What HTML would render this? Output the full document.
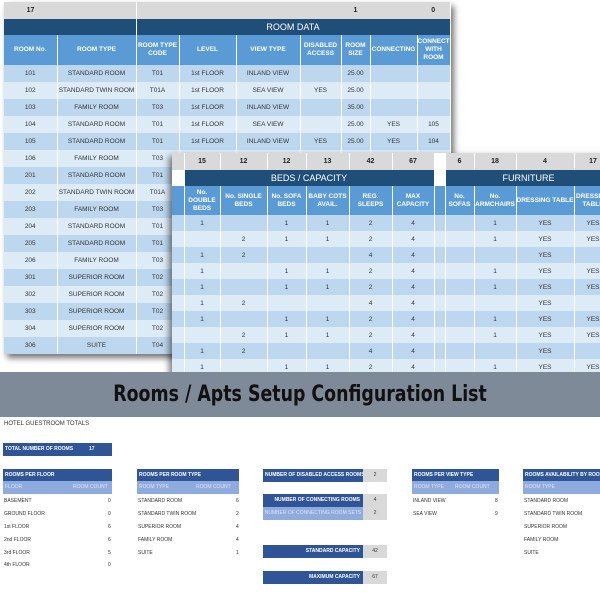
<!DOCTYPE html>
<html><head><meta charset="utf-8"><style>
*{margin:0;padding:0;box-sizing:border-box}
body{width:600px;height:600px;overflow:hidden;background:#fff;font-family:"Liberation Sans",sans-serif;position:relative}
.abs{position:absolute}
table{border-collapse:collapse;table-layout:fixed;position:absolute}
td{text-align:center;font-size:6.5px;color:#333;overflow:hidden;white-space:nowrap;border-right:1px solid #fff;padding:0}
tr.g td{background:#d9d9d9;font-weight:bold;color:#222;height:17px;font-size:7px}
tr.d td{background:#1f4e79;color:#fff;font-size:9px;height:16px}
tr.h td{background:#5b9bd5;color:#fff;font-weight:bold;font-size:6.5px;white-space:normal;line-height:8px}
tr.a td{background:#bdd7ee}
tr.b td{background:#ddebf7}
.back{left:4px;top:2px;width:446px;box-shadow:3px 4px 6px rgba(0,0,0,.55)}
.back tr.a td,.back tr.b td{height:17px}
.front{left:172px;top:153px;width:440px;box-shadow:-3px 3px 6px rgba(0,0,0,.5)}
.front tr.a td,.front tr.b td{height:16px}
.banner{left:0;top:372px;width:600px;height:45px;background:#7f8a98}
.banner div{position:absolute;left:0;width:600px;top:0;line-height:45px;text-align:center;color:#111;font-weight:bold;font-size:22px;font-family:"DejaVu Sans","Liberation Sans",sans-serif;transform:scaleX(.79);transform-origin:300px 0}
.t{font-size:5px;color:#333;position:absolute;white-space:nowrap;line-height:6px}
.box{position:absolute;background:#2f5597;color:#fff;font-size:5px;font-weight:bold;line-height:13px;padding-left:2px;white-space:nowrap;overflow:hidden}
.sub{position:absolute;background:#8faadc;color:#dfe8f7;font-size:5px;line-height:13px;padding-left:2px;white-space:nowrap;overflow:hidden}
.gv{position:absolute;background:#d9d9d9;color:#333;font-size:5px;text-align:center;line-height:13px}
</style></head><body>

<table class="back">
<colgroup><col style="width:53px"><col style="width:79px"><col style="width:43px"><col style="width:57px"><col style="width:64px"><col style="width:41px"><col style="width:29px"><col style="width:47px"><col style="width:33px"></colgroup>
<tr class="g"><td style="border-right:0">17</td><td></td><td style="border-right:0"></td><td style="border-right:0"></td><td style="border-right:0"></td><td style="border-right:0"></td><td style="border-right:0">1</td><td style="border-right:0"></td><td>0</td></tr>
<tr class="d"><td colspan="2"></td><td colspan="7">ROOM DATA</td></tr>
<tr class="h" style="height:30px"><td>ROOM No.</td><td>ROOM TYPE</td><td>ROOM TYPE CODE</td><td>LEVEL</td><td>VIEW TYPE</td><td>DISABLED ACCESS</td><td>ROOM SIZE</td><td>CONNECTING</td><td>CONNECTING WITH ROOM</td></tr>
<tr class="a"><td>101</td><td>STANDARD ROOM</td><td>T01</td><td>1st FLOOR</td><td>INLAND VIEW</td><td></td><td>25.00</td><td></td><td></td></tr>
<tr class="b"><td>102</td><td>STANDARD TWIN ROOM</td><td>T01A</td><td>1st FLOOR</td><td>SEA VIEW</td><td>YES</td><td>25.00</td><td></td><td></td></tr>
<tr class="a"><td>103</td><td>FAMILY ROOM</td><td>T03</td><td>1st FLOOR</td><td>INLAND VIEW</td><td></td><td>35.00</td><td></td><td></td></tr>
<tr class="b"><td>104</td><td>STANDARD ROOM</td><td>T01</td><td>1st FLOOR</td><td>SEA VIEW</td><td></td><td>25.00</td><td>YES</td><td>105</td></tr>
<tr class="a"><td>105</td><td>STANDARD ROOM</td><td>T01</td><td>1st FLOOR</td><td>INLAND VIEW</td><td>YES</td><td>25.00</td><td>YES</td><td>104</td></tr>
<tr class="b"><td>106</td><td>FAMILY ROOM</td><td>T03</td><td></td><td></td><td></td><td></td><td></td><td></td></tr>
<tr class="a"><td>201</td><td>STANDARD ROOM</td><td>T01</td><td></td><td></td><td></td><td></td><td></td><td></td></tr>
<tr class="b"><td>202</td><td>STANDARD TWIN ROOM</td><td>T01A</td><td></td><td></td><td></td><td></td><td></td><td></td></tr>
<tr class="a"><td>203</td><td>FAMILY ROOM</td><td>T03</td><td></td><td></td><td></td><td></td><td></td><td></td></tr>
<tr class="b"><td>204</td><td>STANDARD ROOM</td><td>T01</td><td></td><td></td><td></td><td></td><td></td><td></td></tr>
<tr class="a"><td>205</td><td>STANDARD ROOM</td><td>T01</td><td></td><td></td><td></td><td></td><td></td><td></td></tr>
<tr class="b"><td>206</td><td>FAMILY ROOM</td><td>T03</td><td></td><td></td><td></td><td></td><td></td><td></td></tr>
<tr class="a"><td>301</td><td>SUPERIOR ROOM</td><td>T02</td><td></td><td></td><td></td><td></td><td></td><td></td></tr>
<tr class="b"><td>302</td><td>SUPERIOR ROOM</td><td>T02</td><td></td><td></td><td></td><td></td><td></td><td></td></tr>
<tr class="a"><td>303</td><td>SUPERIOR ROOM</td><td>T02</td><td></td><td></td><td></td><td></td><td></td><td></td></tr>
<tr class="b"><td>304</td><td>SUPERIOR ROOM</td><td>T02</td><td></td><td></td><td></td><td></td><td></td><td></td></tr>
<tr class="a"><td>306</td><td>SUITE</td><td>T04</td><td></td><td></td><td></td><td></td><td></td><td></td></tr>
</table>

<table class="front">
<colgroup><col style="width:12px"><col style="width:36px"><col style="width:47px"><col style="width:39px"><col style="width:43px"><col style="width:43px"><col style="width:42px"><col style="width:11px"><col style="width:29px"><col style="width:42px"><col style="width:58px"><col style="width:38px"></colgroup>
<tr class="g"><td></td><td>15</td><td>12</td><td>12</td><td>13</td><td>42</td><td>67</td><td style="background:#fff"></td><td>6</td><td>18</td><td>4</td><td>17</td></tr>
<tr class="d"><td style="background:#fff"></td><td colspan="6">BEDS / CAPACITY</td><td style="background:#fff"></td><td colspan="4">FURNITURE</td></tr>
<tr class="h" style="height:29px"><td></td><td>No. DOUBLE BEDS</td><td>No. SINGLE BEDS</td><td>No. SOFA BEDS</td><td>BABY COTS AVAIL.</td><td>REG. SLEEPS</td><td>MAX CAPACITY</td><td></td><td>No. SOFAS</td><td>No. ARMCHAIRS</td><td>DRESSING TABLE</td><td>DRESSING TABLE</td></tr>
<tr class="a"><td></td><td>1</td><td></td><td>1</td><td>1</td><td>2</td><td>4</td><td></td><td></td><td>1</td><td>YES</td><td>YES</td></tr>
<tr class="b"><td></td><td></td><td>2</td><td>1</td><td>1</td><td>2</td><td>4</td><td></td><td></td><td>1</td><td>YES</td><td>YES</td></tr>
<tr class="a"><td></td><td>1</td><td>2</td><td></td><td></td><td>4</td><td>4</td><td></td><td></td><td></td><td>YES</td><td></td></tr>
<tr class="b"><td></td><td>1</td><td></td><td>1</td><td>1</td><td>2</td><td>4</td><td></td><td></td><td>1</td><td>YES</td><td>YES</td></tr>
<tr class="a"><td></td><td>1</td><td></td><td>1</td><td>1</td><td>2</td><td>4</td><td></td><td></td><td>1</td><td>YES</td><td>YES</td></tr>
<tr class="b"><td></td><td>1</td><td>2</td><td></td><td></td><td>4</td><td>4</td><td></td><td></td><td></td><td>YES</td><td></td></tr>
<tr class="a"><td></td><td>1</td><td></td><td>1</td><td>1</td><td>2</td><td>4</td><td></td><td></td><td>1</td><td>YES</td><td>YES</td></tr>
<tr class="b"><td></td><td></td><td>2</td><td>1</td><td>1</td><td>2</td><td>4</td><td></td><td></td><td>1</td><td>YES</td><td>YES</td></tr>
<tr class="a"><td></td><td>1</td><td>2</td><td></td><td></td><td>4</td><td>4</td><td></td><td></td><td></td><td>YES</td><td></td></tr>
<tr class="b"><td></td><td>1</td><td></td><td>1</td><td>1</td><td>2</td><td>4</td><td></td><td></td><td>1</td><td>YES</td><td>YES</td></tr>
</table>

<div class="abs banner"><div>Rooms / Apts Setup Configuration List</div></div>

<div class="t" style="left:4px;top:421px;font-size:6px">HOTEL GUESTROOM TOTALS</div>
<div class="box" style="left:3px;top:443px;width:109px">TOTAL NUMBER OF ROOMS<span style="position:absolute;left:86px">17</span></div>

<div class="box" style="left:3px;top:469px;width:109px">ROOMS PER FLOOR</div>
<div class="sub" style="left:3px;top:481px;width:109px">FLOOR<span style="position:absolute;left:70px">ROOM COUNT</span></div>
<div class="t" style="left:4px;top:498px">BASEMENT</div><div class="t" style="left:108px;top:498px">0</div>
<div class="t" style="left:4px;top:511px">GROUND FLOOR</div><div class="t" style="left:108px;top:511px">0</div>
<div class="t" style="left:4px;top:524px">1st FLOOR</div><div class="t" style="left:108px;top:524px">6</div>
<div class="t" style="left:4px;top:537px">2nd FLOOR</div><div class="t" style="left:108px;top:537px">6</div>
<div class="t" style="left:4px;top:550px">3rd FLOOR</div><div class="t" style="left:108px;top:550px">5</div>
<div class="t" style="left:4px;top:562px">4th FLOOR</div><div class="t" style="left:108px;top:562px">0</div>

<div class="box" style="left:137px;top:469px;width:102px">ROOMS PER ROOM TYPE</div>
<div class="sub" style="left:137px;top:481px;width:102px">ROOM TYPE<span style="position:absolute;left:59px">ROOM COUNT</span></div>
<div class="t" style="left:138px;top:498px">STANDARD ROOM</div><div class="t" style="left:236px;top:498px">6</div>
<div class="t" style="left:138px;top:511px">STANDARD TWIN ROOM</div><div class="t" style="left:236px;top:511px">2</div>
<div class="t" style="left:138px;top:524px">SUPERIOR ROOM</div><div class="t" style="left:236px;top:524px">4</div>
<div class="t" style="left:138px;top:537px">FAMILY ROOM</div><div class="t" style="left:236px;top:537px">4</div>
<div class="t" style="left:138px;top:550px">SUITE</div><div class="t" style="left:236px;top:550px">1</div>

<div class="box" style="left:263px;top:469px;width:100px;padding:0 0 0 2px">NUMBER OF DISABLED ACCESS ROOMS</div><div class="gv" style="left:363px;top:469px;width:24px">2</div>
<div class="box" style="left:263px;top:494px;width:100px;padding:0 3px 0 0;text-align:right">NUMBER OF CONNECTING ROOMS</div><div class="gv" style="left:363px;top:494px;width:24px;border-bottom:1px solid #999">4</div>
<div class="sub" style="left:263px;top:507px;width:100px;padding:0;text-align:center">NUMBER OF CONNECTING ROOM SETS</div><div class="gv" style="left:363px;top:507px;width:24px">2</div>
<div class="box" style="left:263px;top:545px;width:100px;padding:0 3px 0 0;text-align:right">STANDARD CAPACITY</div><div class="gv" style="left:363px;top:545px;width:24px">42</div>
<div class="box" style="left:263px;top:571px;width:100px;padding:0 3px 0 0;text-align:right">MAXIMUM CAPACITY</div><div class="gv" style="left:363px;top:571px;width:24px">67</div>

<div class="box" style="left:412px;top:469px;width:87px">ROOMS PER VIEW TYPE</div>
<div class="sub" style="left:412px;top:481px;width:87px">ROOM TYPE<span style="position:absolute;left:43px">ROOM COUNT</span></div>
<div class="t" style="left:413px;top:498px">INLAND VIEW</div><div class="t" style="left:495px;top:498px">8</div>
<div class="t" style="left:413px;top:511px">SEA VIEW</div><div class="t" style="left:495px;top:511px">9</div>

<div class="box" style="left:523px;top:469px;width:77px">ROOMS AVAILABILITY BY ROOM TYPE</div>
<div class="sub" style="left:523px;top:481px;width:77px">ROOM TYPE</div>
<div class="t" style="left:524px;top:498px">STANDARD ROOM</div>
<div class="t" style="left:524px;top:511px">STANDARD TWIN ROOM</div>
<div class="t" style="left:524px;top:524px">SUPERIOR ROOM</div>
<div class="t" style="left:524px;top:537px">FAMILY ROOM</div>
<div class="t" style="left:524px;top:550px">SUITE</div>
</body></html>
